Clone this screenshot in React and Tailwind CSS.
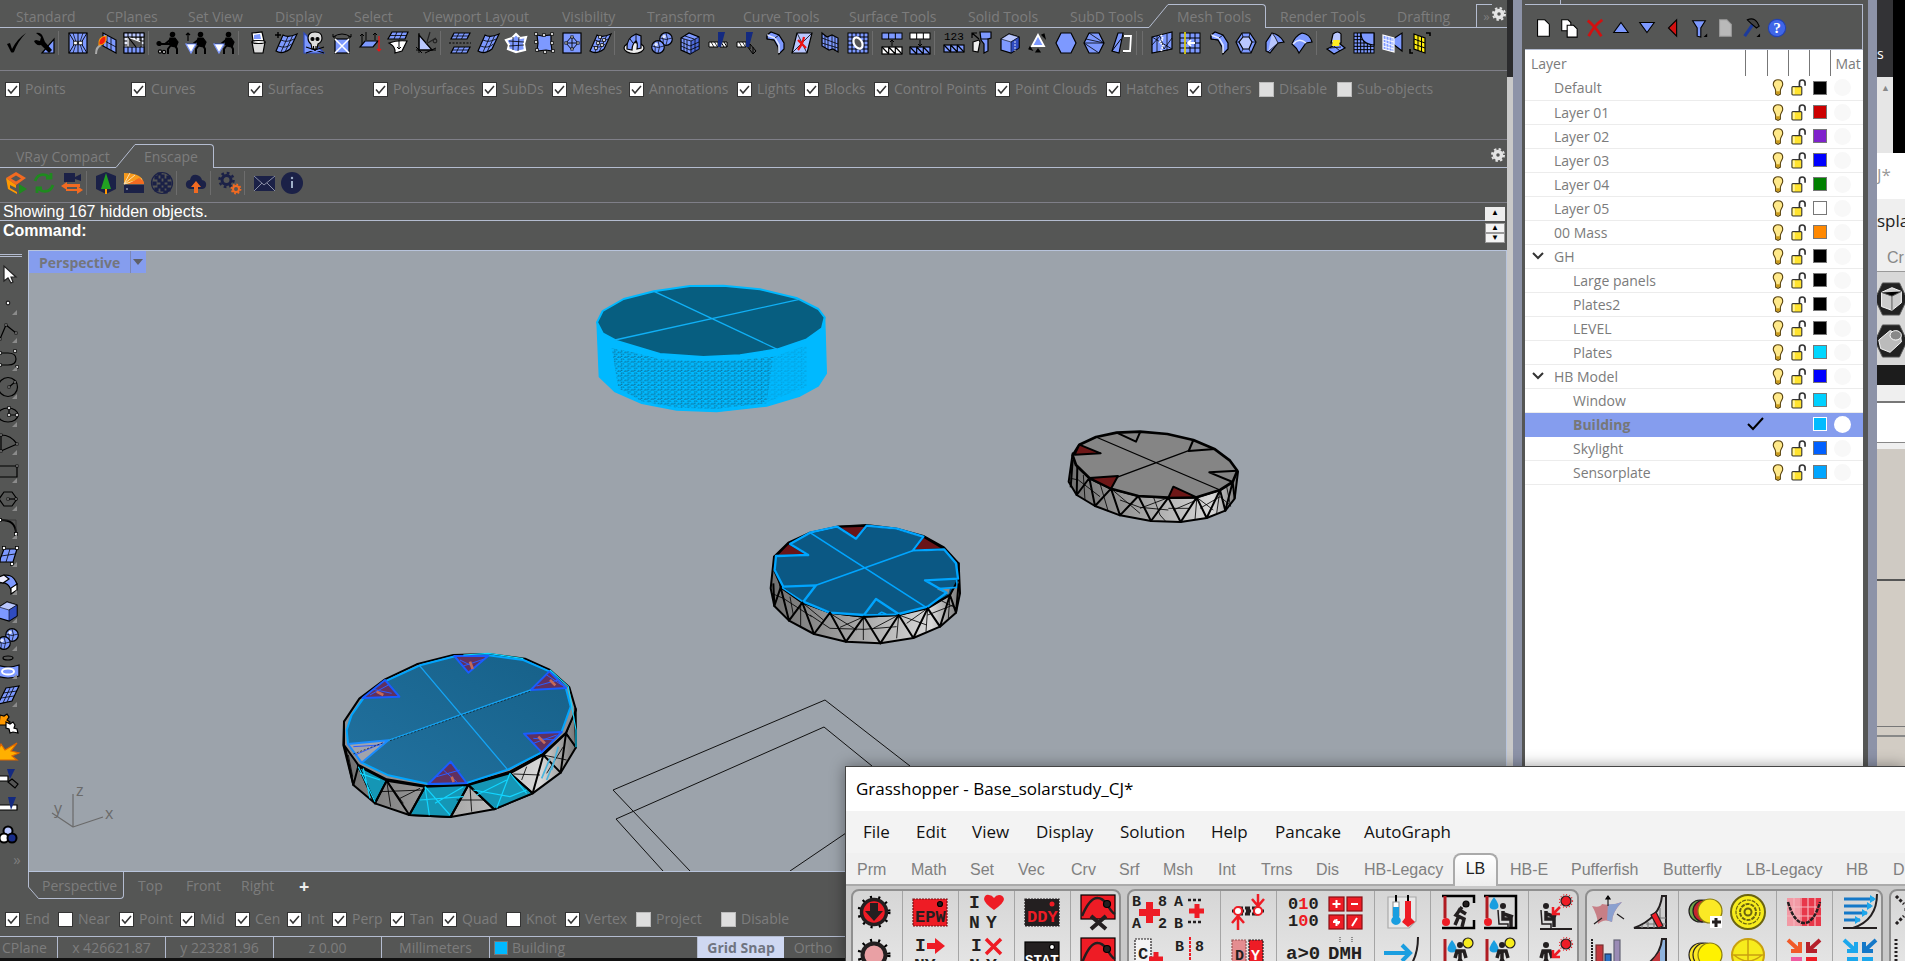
import React from 'react';

const B = '#7d99ff';
const D = '#2f4bc0';
const L = '#b9c7ff';

// small drawing helpers, every tool icon lives on a 22x22 canvas
const Svg = ({ children, className = 'w-[22px] h-[22px]', box = '0 0 22 22' }) => (
  <svg viewBox={box} className={`${className} shrink-0 overflow-visible`} fill="none" stroke="#000" strokeWidth="1.2" aria-hidden="true">
    {children}
  </svg>
);

const Grid = ({ x, y, w, h, nx, ny, fill = B, stroke = '#000' }) => (
  <g stroke={stroke} strokeWidth="1">
    <rect x={x} y={y} width={w} height={h} fill={fill} />
    {Array.from({ length: nx - 1 }, (_, i) => (
      <path key={`v${i}`} d={`M${x + ((i + 1) * w) / nx} ${y}v${h}`} />
    ))}
    {Array.from({ length: ny - 1 }, (_, i) => (
      <path key={`h${i}`} d={`M${x} ${y + ((i + 1) * h) / ny}h${w}`} />
    ))}
  </g>
);

const Dots = ({ at, r = 1.3 }) => at.map(([x, y]) => (
  <rect key={`${x}-${y}`} x={x - r} y={y - r} width={r * 2} height={r * 2} fill="#fff" strokeWidth=".8" />
));

const Patch = () => (
  <g>
    <path d="M8 3q5 3 14-1l-7 15q-8 6-14 2z" fill={B} />
    <path d="M13 4.500L6 20M17.500 4l-7 15M6 8q6 3 13-1M3.500 14q7 3 13-2" strokeWidth=".8" />
  </g>
);

const Person = () => (
  <g fill="#000" stroke="#000">
    <circle cx="15.500" cy="2.500" r="2.200" />
    <path d="M13 6l5 0 3 4-2 5-5-1-2-4z" />
    <path d="M14 13l-3 4v5M18 13l2 4v5M13 8l-5 4M2 12h11" strokeWidth="2" fill="none" />
  </g>
);

const Tri3 = ({ y, fill = '#fff' }) => (
  <g strokeWidth="1.2">
    <rect x="1" y={y} width="20" height="7" fill={fill} />
    <path d={`M7.700 ${y}v7M14.300 ${y}v7M1 ${y}l6.700 7M7.700 ${y}l6.600 7M14.300 ${y}l6.700 7`} />
  </g>
);

const Spheres = () => (
  <g>
    <circle cx="15" cy="7" r="6.300" fill={B} />
    <circle cx="7" cy="15" r="6.300" fill={B} />
    <path d="M9 6q6 3 12 0M1 14q6 3 12 0M15 1q3 6 0 12M7 9q3 6 0 12M11 3q2 6 1 9M3 11q2 6 1 9" strokeWidth=".7" />
    <circle cx="13" cy="4.500" r="1.800" fill="#dfe6ff" stroke="none" />
    <circle cx="5" cy="12.500" r="1.800" fill="#dfe6ff" stroke="none" />
  </g>
);

const Cube = () => (
  <g>
    <path d="M2 7l8-5 10 3v11l-8 5-10-3z" fill={B} />
    <path d="M2 7l8-5 10 3-8 5z" fill={L} strokeWidth=".6" />
    <path d="M12 10l8-5v11l-8 5z" fill={D} strokeWidth=".6" />
  </g>
);

const Bend = () => (
  <g>
    <path d="M4 3l4-3 8 3 5 8v6l-5 5-1-7-4-7-7-1z" fill={B} />
    <path d="M4 3l8 3 4 7v8" stroke="#e6ebff" strokeWidth="1.500" />
    <path d="M4 3v4l7 1M16 3l-4 3" strokeWidth=".8" />
  </g>
);

const Split = ({ tilt }) => (
  <g>
    <path d="M2 10h9v5H2z" fill="#fff" strokeWidth="1" />
    <path d="M4 10l3 5M7.500 10l3 5" strokeWidth=".8" />
    {tilt ? (
      <path d="M12 14l3-2 6 7-3 3zM15 12l0 5M18 15l0 6" fill="#555" strokeWidth="1" />
    ) : (
      <path d="M13 10h7v5h-7zM14 10l3 5M17 10l3 5" fill="#fff" strokeWidth="1" />
    )}
    <path d="M11 0h7l-4 15h-3z" fill="#142a80" stroke="none" />
  </g>
);

const meshTools = [
  [
    ['Accept', <path d="M2 12l3-1 2 6Q12 7 21 1 13 9 9 20q-2 1-3 0z" fill="#000" stroke="none" />],
    ['Options', <g><path d="M9 21L21 7v14z" fill={B} /><path d="M3 1q5-1 7 4l2 5 7 8-3 3-8-8q-5 1-7-4l2-1 4 1 1-4z" fill="#000" stroke="none" /></g>],
  ],
  [
    ['Mesh split', <g><rect x="2" y="1" width="18" height="20" fill={B} /><path d="M2 1l6 10-6 10M20 1l-6 10 6 10M11 1v20" strokeWidth=".9" /><path d="M6 1l3 9M16 1l-3 9M6 21l3-9M16 21l-3-9" strokeWidth=".7" /><Dots at={[[8.500, 11], [13.500, 11]]} r={1.8} /></g>],
    ['Burn', <g><path d="M8 1l13 7v13L8 14z" fill={B} /><path d="M12 4v12M16 6v12M8 8l13 7" strokeWidth=".8" /><path d="M1 22q0-7 5-9" stroke="#aaa" strokeWidth="2" /><path d="M4 13q-1-8 7-9 1 9-7 9z" fill="#f21b0c" stroke="#f90" /></g>],
    ['Patch mesh', <g><Grid x={1} y={1} w={20} h={20} nx={5} ny={5} fill="#e8edff" /><path d="M5 5v10h13v-5z" fill="#555" stroke="#fff" /><path d="M5 5l8 10M18 5v10" /><Grid x={1} y={15} w={20} h={6} nx={5} ny={1} /><Grid x={1} y={1} w={20} h={4} nx={5} ny={1} fill={L} /></g>],
  ],
  [
    ['Reduce', <g><Person /><circle cx="2" cy="11.500" r="2" fill="#000" /><circle cx="3" cy="19.500" r="1.600" fill="#ccc" /><circle cx="7" cy="20" r="1.600" fill="#ccc" /></g>],
    ['Offset', <g><Person /><path d="M1 12h10l-5 9z" fill="#fff" stroke={B} /><path d="M3 9V1M1 3l2-2 2 2" /></g>],
    ['Rebuild', <g><Person /><path d="M1 12h10l-5 9z" fill="#fff" stroke={B} /></g>],
  ],
  [
    ['Cull', <g><path d="M5 10h13l-2 11H7z" fill="#ddd" /><path d="M6 9L5 1l10-1 2 9z" fill="#fff" /><path d="M7 7V3l6-1 1 5z" fill={B} stroke="none" /><ellipse cx="11.500" cy="10" rx="6.500" ry="1.500" fill="#fff" /></g>],
    ['New patch', <g><Patch /><path d="M3 0v6M0 3h6" strokeWidth="1.400" /></g>],
    ['Check', <g><path d="M1 1v20h20z" fill={B} stroke={D} /><path d="M5 6q0-6 7-6t7 6q0 4-4 6l-1 5H9l-1-5q-3-2-3-6z" fill="#ddd" /><circle cx="9.500" cy="7" r="1.500" fill="#000" /><circle cx="14.500" cy="7" r="1.500" fill="#000" /><path d="M3 15l18 6M21 15L3 21M10.500 14v3M13 14v3" /></g>],
    ['Flip', <g><rect x="4" y="7" width="14" height="14" fill={B} /><path d="M4 7l14 14M18 7L4 21" stroke="#fff" strokeWidth="1.500" /><path d="M2 5q9-6 18 0M2 2v3h3M20 2v3h-3" strokeWidth="1" /></g>],
    ['Extrude', <g><path d="M1 15h13l5-6H6z" fill={B} /><path d="M3 13V2M7 8V0M16 8V1M1 4l2-2 2 2M14 3l2-2 2 2" strokeWidth="1" /><path d="M20 4v15M18 17l2 2 2-2" stroke="#e11" /></g>],
    ['Drape', <g><path d="M5 0h16l-3 7H1z" fill={B} /><path d="M10 0L7 7M15.500 0l-3 7M3 3.500h16" strokeWidth=".8" /><path d="M2 11q8-3 18-2-2 4-5 10l-7 2q1-6-6-10z" fill="#fff" /><path d="M12 8v9M10 15l2 2 2-2" strokeWidth="1" /></g>],
    ['Trim', <g><path d="M4 3l13 15H4z" fill={L} /><path d="M1 18h20M4 1v20M1 15l6 6M10 21l11-5" strokeWidth="1" /><path d="M11 12l10-6M12 10l3-10" stroke="#222" /><circle cx="20" cy="9" r="1.800" stroke="#222" /></g>],
  ],
  [
    ['Match', <g><path d="M5 1h16l-3 6H2z" fill={B} /><path d="M5 15h16l-3 6H2z" fill={B} /><path d="M10 1L7 7M15.500 1l-3 6M3.500 4h16M10 15l-3 6M15.500 15l-3 6M3.500 18h16" strokeWidth=".8" /><path d="M0 11h22" strokeDasharray="2 1.500" strokeWidth="1" /></g>],
    ['Patch', <Patch />],
    ['Star mesh', <g><path d="M11 2l4 4 6-1-2 7 1 6-9 2-8-3 1-4-3-5 6-2z" fill={B} stroke="#fff" strokeWidth="2.200" /><path d="M8 5v13M14 5l-1 14M4 9l15 1M4 14l15-1" strokeWidth=".8" /></g>],
    ['Points on', <g><path d="M4 3l5 1 9-1v8l1 8-6-1-9 1 1-8z" fill={B} /><Dots at={[[3, 2], [11, 3], [19, 2], [3, 10], [19, 11], [4, 18], [12, 20], [20, 19]]} /></g>],
    ['Diamond', <g><rect x="2" y="1" width="18" height="20" fill={B} /><path d="M11 4l6 7-6 7-6-7zM11 4v14M5 11h12" strokeWidth=".9" /><Dots at={[[11, 5], [17, 11], [11, 17], [5, 11]]} r={1.1} /></g>],
    ['Weld', <g><Patch /><Dots at={[[11, 5], [15, 8], [9, 11], [13, 13], [7, 16]]} /></g>],
  ],
  [
    ['Torus', <g><ellipse cx="11" cy="16" rx="10" ry="5.500" fill="#eee" /><path d="M4 17q-1-11 9-15l5 2v12l-4 1q1-6-1-8-4 3-4 9z" fill={B} /><path d="M13 2v7M7 7l3 4" strokeWidth=".9" /></g>],
    ['Spheres', <Spheres />],
    ['Mesh box', <g><path d="M2 6l8-5 10 4v12l-9 5-9-4z" fill={B} /><path d="M12 9l8-4v12l-9 5z" fill={D} stroke="none" opacity=".6" /><path d="M5 7v13M8 8v13M12 9v12M16 7v12M2 10l9 4 9-4M2 14l9 4 9-4M2 6l10 3 8-4M6 4l9 3" strokeWidth=".8" /></g>],
    ['Split mesh', <Split />],
    ['Trim mesh', <Split tilt />],
    ['Pipe', <Bend />],
    ['Delete face', <g><path d="M6 1h15l-5 20H1z" fill={L} /><path d="M6 1l10 20M21 1L1 21" strokeWidth=".8" /><path d="M7 8l8 8M13 5q-1 6-6 13" stroke="#e11" strokeWidth="2.200" /></g>],
    ['Wave', <g><path d="M3 1l5 4 5-2 6 3v14l-5-3-4 1-7-4z" fill={B} /><path d="M6 3v13M9 4v13M13 3v14M16 5v14M3 6l16 6M3 11l16 5" strokeWidth=".8" /></g>],
    ['Fill hole', <g><Grid x={1} y={1} w={20} h={20} nx={5} ny={5} /><ellipse cx="11" cy="11" rx="4" ry="6" transform="rotate(-30 11 11)" fill="#555" stroke="#fff" strokeWidth="2.200" /></g>],
  ],
  [
    ['Append', <g><Grid x={1} y={1} w={20} h={6} nx={3} ny={1} /><Tri3 y={15} /><path d="M11 14V8M9 10l2-2 2 2" strokeWidth="1" /></g>],
    ['Explode', <g><Grid x={1} y={1} w={20} h={6} nx={3} ny={1} fill="#fff" /><Tri3 y={15} fill={B} /><path d="M11 8v6M9 12l2 2 2-2" strokeWidth="1" /></g>],
  ],
  [
    ['Count', <g><text x="1" y="8" fontSize="11" fontFamily="Liberation Mono" fill="#000" stroke="none">123</text><Tri3 y={13} fill={B} /></g>],
    ['Unfold', <g><path d="M9 0h11v6l-3 1v12l-4 2v-9l-3-4z" fill={B} /><path d="M2 10l6-2 1 2-2 10-5-1z" fill="#eee" /><path d="M1 6V1h5M1 1l7 6M10 7h7" /></g>],
    ['Box', <g><Cube /><path d="M16 9v10" stroke="#fff" strokeDasharray="2 1" strokeWidth=".8" /></g>],
    ['Cone', <g><path d="M11 3l6 11H5z" fill={B} stroke="#fff" strokeWidth="1.800" /><path d="M15 3l3 3-1-4zM11 17l2 3h-4zM3 15l2 3-3-1z" fill="#000" /></g>],
    ['Hexagon', <path d="M6 1h10l5 10-5 10H6L1 11z" fill={B} />],
    ['Triangulate', <g><path d="M6 1h10l5 10-5 10H6L1 11z" fill={B} /><path d="M6 1l15 10H1L16 21M3 7l18 4" strokeWidth=".8" /></g>],
    ['Unweld', <g><path d="M7 1h5L8 21l-7-2z" fill={B} /><path d="M1 19L10 7M12 4h8l-1 15-7 1" strokeWidth="1" /><path d="M13 4h7l-1 15h-7" stroke="#fff" strokeWidth="1.800" /></g>],
  ],
  [],
  [
    ['Fracture', <g><path d="M1 5l20-5v17L1 21z" fill={B} /><path d="M1 13l8-9 4 13 8-11M6 4l0 16M16 2v17M1 5l20 12" strokeWidth=".8" /><path d="M10 3l2 4-3 3 3 4-2 5" stroke="#fff" strokeDasharray="1.500 1" strokeWidth="2" /></g>],
    ['Align', <g><Grid x={1} y={1} w={20} h={20} nx={4} ny={4} /><path d="M6 0v22" stroke="#fe1" strokeWidth="1.500" /><path d="M16 11H9M12 8l-3 3 3 3" stroke="#fff" strokeWidth="1.800" /></g>],
    ['Fold', <Bend />],
    ['Inset', <g><path d="M7 1h8l6 9-5 11H6L1 10z" fill={B} /><path d="M8 5h6l3 5-3 7H8l-4-7z" fill={L} /><path d="M7 1l1 4M15 1l-1 4M21 10h-4M16 21l-2-4M6 21l2-4M1 10h3" strokeWidth=".8" /></g>],
    ['Soft edge', <g><path d="M3 10L9 1q7 1 12 9l-6 1-8 10-4-2z" fill={B} /><path d="M9 1q3 3 6 10L5 20" fill={L} strokeWidth=".8" /></g>],
    ['Curl', <g><path d="M1 12Q4 4 11 1q8 1 10 9l-6 1-7 10q-2-5-7-9z" fill={B} /><path d="M2 12q6-7 13-1" stroke="#e6ebff" strokeWidth="1.500" /></g>],
  ],
  [
    ['Extract', <g><path d="M2 17l12-6 6 5-11 6z" fill={B} /><path d="M9 14l6 5M5 16l11-1" strokeWidth=".8" /><path d="M8 2q5-4 8 0v9H6z" fill={L} /><path d="M8 8h7l-1 6-7 0z" fill="#fe2" stroke="none" /></g>],
    ['Fillet', <g><Grid x={1} y={1} w={20} h={20} nx={6} ny={6} /><path d="M8 1q0 11 13 12v-12z" fill={B} /></g>],
    ['Mirror', <g><path d="M12 7l9-6v18l-9-7z" fill={B} /><path d="M2 3l11 3v14L2 17z" fill={B} stroke="#fff" /><path d="M5 4v14M8 5v14M11 6v13M2 7l11 3M2 10l11 4M2 14l11 3" stroke="#fff" strokeWidth=".9" /></g>],
    ['Select', <g><path d="M5 2l11 4v15L5 17z" fill="#fe1" /><path d="M9 3.500v15M12.500 5v15M5 7l11 4M5 12l11 4" strokeWidth="1" /><path d="M17 1h4v3M1 17v4h3" strokeWidth="1.600" /></g>],
  ],
];

const NAVY = '#1b2147';
const enscapeTools = [
  [
    ['Start Enscape', <g stroke="none"><path d="M11 0l10 6-10 7L1 6zM11 3.500L6 6.500l5 3 5-3z" fill="#f26a21" fillRule="evenodd" /><path d="M1 6l10 7v3l-6-3v3l7 4v2l-9-5z" fill="#f90" /><path d="M14 12l8 5-8 5z" fill="#1f8a1f" /></g>],
    ['Live updates', <path d="M2 9Q5 1 13 3l3 2M18 1v5h-5M20 13q-3 8-11 6l-3-2M4 21v-5h5" stroke="#1f8a1f" strokeWidth="2.800" />],
    ['Sync views', <g stroke="none"><path d="M3 1h11v9H3zM14 5l6-3v7l-6-2z" fill={NAVY} /><path d="M6 10v2h13v3H6v3l-6-4zM16 14l6 4-6 4v-3H5v-2h11z" fill="#f26a21" /></g>],
  ],
  [
    ['Assets', <g stroke="none"><path d="M1 4l10-4 10 4v13l-10 5-10-5z" fill={NAVY} /><path d="M11 1l5 16H6z" fill="#22a022" /><path d="M10 17h2v5h-2z" fill="#f90" /></g>],
    ['Materials', <g stroke="none"><path d="M1 1q19 0 20 11H1z" fill="#f79a1c" /><path d="M1 12L12 3M1 12l18-5M1 12L7 1" stroke="#fbe0b0" strokeWidth="1" /><path d="M16 6q5 2 5 6H5z" fill="#f26a21" /><rect x="1" y="13" width="20" height="8" fill={NAVY} /><circle cx="4" cy="17" r="1" fill="#8a8fa5" /></g>],
    ['Scene', <g stroke={NAVY} strokeWidth="1.200"><circle cx="11" cy="11" r="10.500" /><path d="M4 4h3v3H4zM10 3h3v3h-3zM16 4h3v3h-3zM7 7h3v3H7zM13 7h3v3h-3zM2 10h3v3H2zM10 10h3v3h-3zM17 10h3v3h-3zM7 13h3v3H7zM13 13h3v3h-3zM4 16h3v3H4zM10 16h3v3h-3zM16 16h3v3h-3zM7 1h3v2H7zM13 19h3v2h-3z" fill={NAVY} /></g>],
  ],
  [
    ['Upload', <g stroke="none"><path d="M5 17q-5-1-4-6 1-3 4-3 1-6 7-5 4 1 5 5 5 1 4 6-1 3-4 3z" fill={NAVY} /><path d="M11 9l5 6h-3v6H9v-6H6z" fill="#f26a21" /></g>],
  ],
  [
    ['Settings', <g><circle cx="7.500" cy="8" r="4.500" stroke={NAVY} strokeWidth="3" /><circle cx="7.500" cy="8" r="7" stroke={NAVY} strokeWidth="2.500" strokeDasharray="2.700 2.800" /><circle cx="17" cy="17" r="3" stroke="#f26a21" strokeWidth="2" /><circle cx="17" cy="17" r="4.500" stroke="#f26a21" strokeWidth="1.800" strokeDasharray="1.700 1.800" /></g>],
  ],
  [
    ['Feedback', <g><rect x="1" y="4" width="21" height="15" fill={NAVY} stroke="none" /><path d="M1 4l10 9L22 4M1 19l8-8M22 19l-8-8" stroke="#8a8fa5" strokeWidth="1" /></g>],
    ['About', <g><circle cx="11" cy="11" r="11" fill={NAVY} stroke="none" /><path d="M11 9v7" stroke="#9fb0c8" strokeWidth="2" /><circle cx="11" cy="6" r="1.200" fill="#9fb0c8" stroke="none" /></g>],
  ],
];

const sideTools = [
  ['Cancel', <path d="M7 2v15l4-3 3 5 2-1-2-5h5z" fill="#fff" stroke="#222" />],
  ['Point', <circle cx="11" cy="11" r="1.800" fill="#fff" stroke="#222" />],
  ['Polyline', <g><path d="M3 19L9 5l10 8" /><Dots at={[[3, 19], [9, 5], [19, 13]]} r={1} /></g>],
  ['Curve', <g><path d="M3 5h8q8 0 8 6t-8 6H3" /><Dots at={[[3, 5], [18, 3], [3, 17], [20, 19]]} /></g>],
  ['Circle', <g><circle cx="11" cy="11" r="9.500" /><path d="M12 11l6-5" /><Dots at={[[12, 11], [18, 6]]} r={1} /></g>],
  ['Ellipse', <g><ellipse cx="11" cy="11" rx="10" ry="7" /><path d="M12 4v7h8" /><Dots at={[[12, 4], [12, 11], [20, 11]]} /></g>],
  ['Arc', <g><path d="M4 19V3q10 0 16 9L4 19" /><Dots at={[[4, 3], [20, 12], [4, 19]]} r={1} /></g>],
  ['Rectangle', <g><path d="M1 6h19v11H1z" /><Dots at={[[20, 6]]} r={1} /></g>],
  ['Polygon', <g><path d="M7 4h8l5 7-5 7H7l-5-7z" /><path d="M11 11h8" /><Dots at={[[11, 11], [19, 11]]} r={1} /></g>],
  ['Fillet', <g><path d="M2 4q17-1 17 14" strokeWidth="2" /><path d="M4 4h15v14" stroke="#333" strokeWidth=".8" /><Dots at={[[3, 4], [19, 18]]} r={1.5} /></g>],
  ['Surface', <g><path d="M7 5h13l-4 13H2z" fill={B} /><path d="M13 5L9 18M4 12l14-2" strokeWidth=".8" /><Dots at={[[7, 4], [20, 4], [2, 17], [15, 20]]} r={1.500} /></g>],
  ['Extrude surface', <g><path d="M2 5q13-6 18 7l-6 6Q11 9 2 11z" fill={B} /><path d="M20 12v6l-6 4v-6z" fill="#fff" /><path d="M2 5l5-2 5 4-6 4-4-1z" fill="#eef" /></g>],
  ['Solid box', <Cube />],
  ['Sphere', <Spheres />],
  ['Cylinder', <g><ellipse cx="11" cy="2" rx="5" ry="2" /><path d="M0 9q11 4 22 0v11q-11 4-22 0z" fill={B} /><ellipse cx="11" cy="15.500" rx="6" ry="3" stroke="#fff" strokeWidth="2" /></g>],
  ['Mesh plane', <g><path d="M9 4l13-2-7 15-14 3z" fill={B} /><path d="M13 4L6 19M17 3l-7 15M6 9l14-2M4 14l13-2" strokeWidth=".8" /></g>],
  ['Plugins', <g><path d="M3 3l4 1 3-2 2 3-2 3 3 2-4 3H2z" fill="#f90" /><path d="M9 10l4 2 3-2 2 3-1 3 3 1 1 4-5-1-3 1-1-4-3-1z" fill="#fff" /></g>],
  ['Boom', <path d="M4 4l4 6L20 3l-6 8 8 2-7 3 5 4H0v-6z" fill="#ffb000" stroke="#d60" />],
  ['Trim', <g><path d="M0 8h11v5H0z" fill="#fff" /><path d="M10 1h8l-5 10z" fill="#142a80" stroke="none" /><path d="M11 14l4-3 6 5-3 4z" fill="#555" /></g>],
  ['Split', <g><path d="M0 9h20v5H0z" fill="#fff" /><path d="M11 1h8l-5 13z" fill="#142a80" stroke="none" /></g>],
  ['Boolean', <g strokeWidth="2"><circle cx="11" cy="7" r="4.500" fill={L} /><circle cx="7" cy="14" r="4.500" fill="#fff" /><circle cx="15" cy="14" r="4.500" fill="#172c8a" /></g>],
];

const layerTools = [
  ['New layer', <path d="M5 2h8l5 5v13H5z" fill="#fff" />],
  ['New sublayer', <g fill="#fff"><path d="M3 2h7l3 3v9H3z" /><path d="M9 8h7l4 4v9H9z" /></g>],
  ['Delete layer', <path d="M3 3q7 5 15 17M19 2Q10 8 4 20" stroke="#d21010" strokeWidth="3" />],
  ['Move up', <path d="M11 5l8 11H3z" fill={B} />],
  ['Move down', <path d="M11 16l8-11H3z" fill={B} />],
  ['Move left', <path d="M15 2v18l-9-9z" fill="#d21010" />],
  ['Filter', <g><path d="M4 3h14l-5 8v10l-4-1v-9z" fill={B} /><path d="M20 17v4h-4z" fill="#000" stroke="none" /></g>],
  ['Layer state', <path d="M5 2h8l5 5v13H5z" fill="#b9b9b9" stroke="#999" />],
  ['Tools', <g><path d="M13 7L4 20" stroke="#1d3b9c" strokeWidth="3.500" /><path d="M7 2q7-3 11 3l2 4-3 2-6-5z" fill="#444" /><path d="M21 17v4h-4z" fill="#000" stroke="none" /></g>],
  ['Help', <g><circle cx="11" cy="11" r="9.500" fill="#3f66e8" stroke="#2342b0" /><text x="11" y="17" fontSize="17" fontWeight="bold" fontFamily="Liberation Serif" fill="#fff" stroke="none" textAnchor="middle">?</text></g>],
];

const toolTabs = [
  ['Standard', 'w-[90px]'], ['CPlanes', 'w-[82px]'], ['Set View', 'w-[87px]'], ['Display', 'w-[79px]'],
  ['Select', 'w-[69px]'], ['Viewport Layout', 'w-[139px]'], ['Visibility', 'w-[85px]'], ['Transform', 'w-[96px]'],
  ['Curve Tools', 'w-[106px]'], ['Surface Tools', 'w-[119px]'], ['Solid Tools', 'w-[102px]'], ['SubD Tools', 'w-[78px]'],
];

const filters = [
  ['Points', 'w-[126px]', 'on'], ['Curves', 'w-[117px]', 'on'], ['Surfaces', 'w-[125px]', 'on'], ['Polysurfaces', 'w-[109px]', 'on'],
  ['SubDs', 'w-[70px]', 'on'], ['Meshes', 'w-[77px]', 'on'], ['Annotations', 'w-[108px]', 'on'], ['Lights', 'w-[67px]', 'on'],
  ['Blocks', 'w-[70px]', 'on'], ['Control Points', 'w-[121px]', 'on'], ['Point Clouds', 'w-[111px]', 'on'], ['Hatches', 'w-[81px]', 'on'],
  ['Others', 'w-[72px]', 'on'], ['Disable', 'w-[78px]', 'dim'], ['Sub-objects', 'w-[110px]', 'dim'],
];

const snaps = [
  ['End', 'w-[53px]', 'on'], ['Near', 'w-[61px]', 'off'], ['Point', 'w-[61px]', 'on'], ['Mid', 'w-[55px]', 'on'],
  ['Cen', 'w-[52px]', 'on'], ['Int', 'w-[45px]', 'on'], ['Perp', 'w-[58px]', 'on'], ['Tan', 'w-[52px]', 'on'],
  ['Quad', 'w-[64px]', 'on'], ['Knot', 'w-[59px]', 'off'], ['Vertex', 'w-[71px]', 'on'], ['Project', 'w-[85px]', 'dim'],
  ['Disable', 'w-[85px]', 'dim'],
];

const layers = [
  ['Default', 0, 'bg-black'], ['Layer 01', 0, 'bg-[#cc0000]'], ['Layer 02', 0, 'bg-[#7f22cc]'], ['Layer 03', 0, 'bg-[#0000ff]'],
  ['Layer 04', 0, 'bg-[#008000]'], ['Layer 05', 0, 'bg-white'], ['00 Mass', 0, 'bg-[#ff8800]'], ['GH', 0, 'bg-black', true],
  ['Large panels', 1, 'bg-black'], ['Plates2', 1, 'bg-black'], ['LEVEL', 1, 'bg-black'], ['Plates', 1, 'bg-[#00d7ff]'],
  ['HB Model', 0, 'bg-[#0000ff]', true], ['Window', 1, 'bg-[#00d0ff]'], ['Building', 1, 'bg-[#00bbff]'],
  ['Skylight', 1, 'bg-[#0060ff]'], ['Sensorplate', 1, 'bg-[#00a5ff]'],
];

const ToolButton = ({ name, children }) => (
  <button type="button" aria-label={name} className="flex h-7 w-7 shrink-0 items-center justify-center">
    <Svg>{children}</Svg>
  </button>
);

const ToolRow = ({ groups }) => (
  <div className="flex items-center overflow-hidden pl-0.5">
    {groups.map((group, i) => (
      <React.Fragment key={i}>
        {i > 0 && <span className="mr-[5px] h-6 w-px shrink-0 bg-[#6d6d6d]" />}
        {group.map(([name, icon]) => (
          <ToolButton key={name} name={name}>{icon}</ToolButton>
        ))}
      </React.Fragment>
    ))}
  </div>
);

const Check = ({ label, width, state }) => (
  <label className={`${width} flex shrink-0 items-center gap-[5px] whitespace-nowrap text-[14px] leading-5 text-[#7d7d7d]`}>
    <span className="grid shrink-0">
      <input
        type="checkbox"
        defaultChecked={state === 'on'}
        disabled={state === 'dim'}
        className="col-start-1 row-start-1 h-[15px] w-[15px] appearance-none border border-[#333] bg-white disabled:border-[#bbb] disabled:bg-[#dedede]"
      />
      {state === 'on' && (
        <svg viewBox="0 0 15 15" className="pointer-events-none col-start-1 row-start-1 h-[15px] w-[15px]" fill="none" stroke="#333" strokeWidth="1.500">
          <path d="M3 7.500l3 3.500 6-7" />
        </svg>
      )}
    </span>
    {label}
  </label>
);

const TabSlope = () => (
  <svg viewBox="0 0 20 24" className="h-6 w-5 shrink-0" fill="none" stroke="#b4bcd0" strokeWidth="1">
    <path d="M0 23.500L19 .500h1" />
  </svg>
);

const Gear = () => (
  <svg viewBox="0 0 14 14" className="h-3.5 w-3.5" fill="none" stroke="#e4e4e4">
    <circle cx="7" cy="7" r="3.500" strokeWidth="3.500" />
    <circle cx="7" cy="7" r="6" strokeWidth="2" strokeDasharray="2.400 2.300" />
  </svg>
);

const ToolbarArea = () => (
  <header className="shrink-0">
    <nav className="flex h-7 items-end">
      <div className="flex h-full flex-1 items-end border-b border-[#b4bcd0] pl-4">
        {toolTabs.map(([name, width]) => (
          <button type="button" key={name} className={`${width} shrink-0 whitespace-nowrap text-left leading-5`}>{name}</button>
        ))}
      </div>
      <TabSlope />
      <button type="button" className="h-6 w-[97px] shrink-0 whitespace-nowrap rounded-tr-sm border-r border-t border-[#b4bcd0] pl-2 text-left leading-6">Mesh Tools</button>
      <div className="flex h-full w-[241px] shrink-0 items-end border-b border-[#b4bcd0] pl-3.5">
        <button type="button" className="w-[117px] text-left leading-5">Render Tools</button>
        <button type="button" className="w-[79px] text-left leading-5">Drafting</button>
        <button type="button" aria-label="More tabs" className="h-[23px] w-4 border-l border-t border-[#b4bcd0] pl-1 text-[13px] leading-5">»</button>
        <button type="button" aria-label="Toolbar options" className="pb-1.5"><Gear /></button>
      </div>
    </nav>
    <div className="h-[43px] border-b border-[#7f7f88] pt-px">
      <ToolRow groups={meshTools} />
    </div>
    <div className="flex h-[69px] items-start overflow-hidden border-b border-[#7f7f88] pl-[5px] pt-2">
      {filters.map(([name, width, state]) => (
        <Check key={name} label={name} width={width} state={state} />
      ))}
    </div>
    <nav className="flex h-7 items-end">
      <div className="flex h-6 w-[116px] items-end border-b border-[#b4bcd0] pl-4">
        <button type="button" className="whitespace-nowrap leading-5">VRay Compact</button>
      </div>
      <TabSlope />
      <button type="button" className="h-6 w-[78px] rounded-tr-sm border-r border-t border-[#b4bcd0] pl-2 text-left leading-6">Enscape</button>
      <div className="flex h-6 flex-1 items-start justify-end border-b border-[#b4bcd0] pr-0.5 pt-1">
        <button type="button" aria-label="Panel options"><Gear /></button>
      </div>
    </nav>
    <div className="h-[35px] border-b border-[#7f7f88] pt-px">
      <ToolRow groups={enscapeTools} />
    </div>
    <div className="flex h-[47px] font-['Liberation_Sans',sans-serif] text-[16px] text-white">
      <div className="flex-1">
        <p className="h-[18px] border-b border-[#b4bcd0] pl-[3px] leading-[18px]">Showing 167 hidden objects.</p>
        <label className="flex items-center pl-[3px] font-bold leading-5">
          Command:
          <input className="ml-1 flex-1 bg-transparent outline-none" />
        </label>
      </div>
      <div className="mr-0.5 mt-1 flex w-5 flex-col text-center text-[8px] text-black">
        <span className="h-3.5 bg-[#eee] leading-3">▲</span>
        <button type="button" aria-label="Previous" className="mt-0.5 h-2.5 border border-[#999] bg-[#f4f4f4] leading-2">▲</button>
        <button type="button" aria-label="Next" className="h-2.5 border border-[#999] bg-[#f4f4f4] leading-2">▼</button>
      </div>
    </div>
  </header>
);

const Corner = () => <path d="M20 18v5h-5z" fill="#8b8b8b" stroke="none" />;

const SideBar = () => (
  <aside className="flex w-7 shrink-0 flex-col overflow-hidden pt-1">
    <span className="mb-1 h-[3px] w-[22px] shrink-0 border-y border-[#b4bcd0]" />
    {sideTools.map(([name, icon], i) => (
      <button type="button" key={name} aria-label={name} className="-ml-1 flex h-7 w-6 shrink-0 items-center justify-center">
        <Svg>{icon}{i > 0 && i < 16 && <Corner />}</Svg>
      </button>
    ))}
    <button type="button" aria-label="More tools" className="pl-1.5 text-[15px] leading-5">»</button>
  </aside>
);

/* the four massing models standing in the viewport */
const Model = () => (
  <svg viewBox="29 251 1477 620" preserveAspectRatio="xMinYMin slice" className="absolute inset-0 h-full w-full" fill="none" strokeLinejoin="round" aria-label="Model view">
    <defs>
      <pattern id="perf" width="20" height="14" patternUnits="userSpaceOnUse">
        <path d="M1 5l5-5 1 5zM8 0l6 5H9zM11 13l5-5 1 5zM18 7l2 6h-2zM0 8l3 5H0zM3 8h4v3H3z" fill="#0e6c92" />
      </pattern>
      <linearGradient id="rim" x1="0" x2="1">
        <stop offset="0" stopColor="#6f6f6f" />
        <stop offset=".5" stopColor="#ababab" />
        <stop offset=".85" stopColor="#d8d8d8" />
        <stop offset="1" stopColor="#777" />
      </linearGradient>
      <linearGradient id="roof" x1="0" y1="1" x2="1" y2="0">
        <stop offset="0" stopColor="#2272a0" />
        <stop offset="1" stopColor="#166088" />
      </linearGradient>
    </defs>

    <g stroke="#111">
      <path d="M690 871L613 790 825 700 910 766M663 871L616 819 824 727 872 766M790 871L846 833" />
    </g>

    <g transform="translate(560 260) scale(.33333)">
      <path d="M111 187L118 350 165 395 245 430 350 450 470 455 620 438 720 408 775 378 799 340 794 172 790 205 740 238 652 268 540 286 430 291 300 282 170 243z" fill="#00b9ff" stroke="#00b9ff" strokeWidth="4" />
      <path d="M155 265L200 272 300 298 430 304 540 300 640 290 620 430 470 446 350 443 245 424 175 385z" fill="url(#perf)" />
      <path d="M640 290L740 256 740 380 622 426z" fill="url(#perf)" opacity=".35" />
      <path d="M111 187L128 153 191 117 282 94 390 78 490 77 600 88 712 115 775 147 794 172 786 205 740 238 652 268 540 286 430 291 300 282 170 243 128 220z" fill="#075e80" stroke="#00b9ff" strokeWidth="6" />
      <path d="M282 94L652 268M165 240L718 118" stroke="#10b0f5" strokeWidth="4" />
    </g>

    <g transform="translate(1040 400) scale(.33333)" stroke="#000" strokeWidth="6">
      <path d="M98 160L86 245 110 285 165 318 240 346 333 363 422 366 500 354 556 332 584 296 594 215 540 270 470 292 385 293 295 288 213 266 148 234 112 200z" fill="url(#rim)" />
      <path d="M98 166L118 134 168 111 230 98 300 95 382 102 460 120 525 148 570 182 592 212 578 246 540 270 470 292 385 293 295 288 213 266 148 234 108 195z" fill="#858585" strokeWidth="8" />
      <path d="M118 134L104 164 182 160zM148 234L234 228 213 266zM400 260L385 293 470 292z" fill="#6e1717" />
      <path d="M230 98L288 125 300 97M460 120L446 153 525 147M592 212L508 217 578 246" />
      <path d="M168 111L540 270M230 232L446 152" strokeWidth="4" />
      <path d="M112 200L110 285 148 234 165 318 213 266 240 346 295 288 333 363 385 293 422 366 470 292 500 354 540 270 556 332 578 246 584 296M98 180L92 262" />
      <path d="M92 235L115 240 180 290M130 225L135 300M180 250L205 335M213 266L300 340M240 300L300 322 385 330M340 290L360 345 378 365M385 325L450 325M385 293L300 325M400 330L470 300 465 360M470 292L520 330M480 325L540 290 570 315M540 270L530 340M560 260L572 320" strokeWidth="2.500" />
    </g>

    <g transform="translate(740 500) scale(.33333)" stroke="#000" strokeWidth="6">
      <path d="M102 170L92 265 103 318 147 362 222 402 318 425 421 430 520 414 600 380 648 338 660 280 656 190 630 285 563 325 476 345 372 350 270 338 187 308 122 262z" fill="url(#rim)" />
      <path d="M102 170L145 128 210 98 292 80 380 75 470 86 550 108 612 142 656 190 654 240 630 285 563 322 476 345 372 350 270 338 187 306 125 262 104 215z" fill="#0b5884" />
      <path d="M145 130L205 165 108 168zM292 80L382 77 348 116zM550 110L518 152 612 147z" fill="#6a1518" />
      <path d="M630 265l-40 3 35 15z" fill="#888" stroke="none" />
      <path d="M210 98L292 80 348 116 380 77 470 86 550 110 518 152 612 148 648 190 654 236 555 241 620 278 563 320 476 342 408 297 372 345 270 338 190 305 228 256 130 260 104 210 108 168 205 165 150 132z" stroke="#00a5ff" strokeWidth="7" />
      <path d="M210 98L555 320M228 256L518 152M190 306L125 262M375 345L470 343M415 343l10-6 14 6M650 240L652 262 596 266" stroke="#00a5ff" strokeWidth="5" />
      <path d="M100 250L103 318 122 262 147 362 187 308 222 402 270 338 318 425 372 350 421 430 476 345 520 414 563 325 600 380 630 285 648 338 656 250" />
      <path d="M95 280L130 295 215 350M150 290L160 345M182 310L182 380M187 308L250 360M210 345L270 385 372 388M270 340L350 390M370 352L370 420M372 388L470 380M372 350L300 382M476 345L400 385M476 345L470 415M476 345L560 375M563 325L500 370M563 325L558 395M563 345L640 315M630 285L625 355M600 300L650 325" strokeWidth="2.500" />
    </g>

    <g transform="translate(320 630) scale(.33333)" stroke="#000" strokeWidth="6">
      <path d="M72 275L70 345 100 465 165 520 268 555 392 561 522 538 638 490 722 428 768 352 766 235 738 310 670 375 570 430 445 465 315 470 200 452 115 408z" fill="url(#rim)" />
      <path d="M115 408L200 452 165 520zM315 470L445 465 392 561 268 555zM445 465L570 430 638 490 522 538z" fill="#1596b5" />
      <path d="M72 275L118 206 195 148 290 103 400 75 505 72 615 86 690 120 748 172 768 240 738 308 670 370 570 425 445 462 320 468 200 448 115 405 72 345z" fill="#8b8f94" />
      <path d="M80 300L95 255 130 205 200 152 300 106 405 79 505 76 610 90 688 124 738 176 752 230 725 305 665 367 565 418 440 459 325 462 205 436 125 398 84 340z" fill="url(#roof)" stroke="#00a5ff" strokeWidth="6" />
      <path d="M195 150L238 200 128 204zM403 78L505 77 445 128zM688 124L738 174 632 180zM725 306L612 311 665 367zM392 395L325 462 440 459z" fill="#61305f" stroke="#1a5cff" />
      <path d="M84 342L205 331 125 398z" fill="#a0a3ad" stroke="#1a8cff" />
      <path d="M150 195L205 165M160 178L215 190M430 108L490 88M420 90L460 110M650 168L715 150M680 135L725 165M640 325L705 330M640 340L710 315M350 440L420 420M370 420L410 455M100 350L180 345M105 375L190 338" stroke="#2b5cff" strokeWidth="3" />
      <path d="M170 185l20 10M450 95l8 22M690 150l16 16M655 320l20 20M395 440l6 16" stroke="#c46a5a" strokeWidth="8" />
      <path d="M298 106L562 418M205 331L632 180" stroke="#14a4f5" strokeWidth="4" />
      <path d="M100 372L190 338M210 332L630 184" stroke="#111" strokeWidth="2" strokeDasharray="6 5" />
      <path d="M75 350L100 465 115 408 165 520 200 452 268 555 315 470M392 561L445 465 522 538M638 490L670 375 722 428 738 310 768 352 766 235M570 430L638 490M445 465L392 561" />
      <path d="M200 452L212 530M180 485L310 480M200 452L250 520M240 505L300 475M450 470L455 545M410 510L490 510M580 432L660 435M620 410L605 450M670 375L740 390M680 430L730 350M85 375L98 440M740 310L765 350" strokeWidth="2.500" />
      <path d="M115 410L165 515M120 430L180 450M130 415L150 505M315 470L328 556M315 470L390 555M300 510L430 500M345 520L430 470M570 430L530 535M460 480L570 500 620 480M470 495L560 450M570 430L620 490M430 75L505 70 610 86M690 120L745 170 768 300 768 352" stroke="#12d5ff" strokeWidth="3.500" />
      <path d="M690 385l-25 60M715 350l-20 70M700 400l-20 50" stroke="#4ab4dd" strokeWidth="5" />
    </g>

    <g stroke="#6a6a6a" strokeWidth="1.200">
      <path d="M73 794v33l30-10M73 827l-21-14" />
      <g fill="#6a6a6a" stroke="none" fontSize="16" fontFamily="Open Sans">
        <text x="105" y="819">x</text>
        <text x="54" y="814">y</text>
        <text x="76" y="796">z</text>
      </g>
    </g>
  </svg>
);

const StatusCell = ({ width, children }) => (
  <span className={`${width} flex h-full shrink-0 items-center justify-center border-r border-[#b4bcd0]`}>{children}</span>
);

const Rhino = () => (
  <main className="flex min-w-0 flex-1 flex-col overflow-hidden bg-[#555655] text-[14px] text-[#7d7d7d]">
    <ToolbarArea />
    <div className="flex min-h-0 flex-1">
      <SideBar />
      <section className="relative flex-1 overflow-hidden border border-[#b8c4dc] bg-[#9ca3ab]">
        <Model />
        <button type="button" className="relative flex h-[22px] items-center bg-[#859dee] pl-2.5 font-bold text-[#74767c]">
          Perspective
          <span className="ml-2.5 flex h-full items-center border-l border-[#7b86b5] pl-0.5 pr-[3px]">
            <svg viewBox="0 0 10 6" className="h-1.5 w-2.5"><path d="M0 0h10L5 6z" fill="#5f6068" /></svg>
          </span>
        </button>
      </section>
    </div>
    <nav className="flex h-7 shrink-0 items-start pl-7">
      <button type="button" className="flex h-[27px] items-start">
        <svg viewBox="0 0 12 27" className="h-[27px] w-3" fill="none" stroke="#b4bcd0"><path d="M.500 0v15l10 11.500H12" /></svg>
        <span className="h-[27px] w-[84px] rounded-br-sm border-b border-r border-[#b4bcd0] pl-0.5 text-left leading-7">Perspective</span>
      </button>
      <button type="button" className="ml-3.5 w-12 text-left leading-7">Top</button>
      <button type="button" className="w-[55px] text-left leading-7">Front</button>
      <button type="button" className="w-[58px] text-left leading-7">Right</button>
      <button type="button" className="text-[18px] font-bold leading-7 text-[#eee]">+</button>
    </nav>
    <div className="flex h-9 shrink-0 items-center overflow-hidden pl-[5px] pt-0.5">
      {snaps.map(([name, width, state]) => (
        <Check key={name} label={name} width={width} state={state} />
      ))}
    </div>
    <footer className="flex h-[25px] shrink-0 items-center border-b-[3px] border-t border-b-[#111] border-t-[#b4bcd0]">
      <StatusCell width="w-[58px] pr-2">CPlane</StatusCell>
      <StatusCell width="w-[108px]">x 426621.87</StatusCell>
      <StatusCell width="w-[108px]">y 223281.96</StatusCell>
      <StatusCell width="w-[108px]">z 0.00</StatusCell>
      <StatusCell width="w-[108px]">Millimeters</StatusCell>
      <span className="flex h-full w-[208px] shrink-0 items-center gap-1 border-r border-[#b4bcd0] pl-1">
        <i className="h-3.5 w-3.5 border border-[#777] bg-[#00b9ff]" />
        Building
      </span>
      <button type="button" className="h-full w-[86px] bg-[#cfd8f2] font-bold text-[#6f7480]">Grid Snap</button>
      <button type="button" className="w-[58px]">Ortho</button>
    </footer>
  </main>
);

const Bulb = () => (
  <svg viewBox="0 0 12 18" className="h-[17px] w-3" stroke="#5a4410" strokeWidth="1.200">
    <path d="M6 .800c3 0 5 2 5 4.700 0 2.500-2.500 4-2.500 7v3.500L6 17.300 3.500 16v-3.500c0-3-2.500-4.500-2.500-7C1 2.800 3 .800 6 .800z" fill="#ffe98a" />
    <path d="M4 13h4v3H4z" fill="#c99a1c" stroke="none" />
  </svg>
);

const Lock = () => (
  <svg viewBox="0 0 16 18" className="h-[17px] w-[15px]" fill="none" stroke="#333" strokeWidth="1.200">
    <path d="M9 8V4q0-3 3-3t3 3v3" strokeWidth="1.800" />
    <rect x="1" y="8" width="10.500" height="9" rx="1" fill="#ffe32e" />
    <path d="M3 9v7" stroke="#fff4a5" strokeWidth="2" />
  </svg>
);

const LayerRow = ({ name, depth, color, open }) => {
  const current = name === 'Building';
  return (
    <tr className={`h-6 border-b ${current ? 'border-[#859dee] bg-[#859dee] font-bold text-[#777]' : 'border-[#ececec]'}`}>
      <td className="p-0">
        <div className={`flex items-center whitespace-nowrap ${depth ? 'pl-12' : 'pl-[7px]'}`}>
          {!depth && (
            <svg viewBox="0 0 12 8" className="mr-[10px] h-2 w-3" fill="none" stroke="#333" strokeWidth="2">
              {open && <path d="M1 1l5 5 5-5" />}
            </svg>
          )}
          {name}
        </div>
      </td>
      <td className="p-0">
        {current && (
          <svg viewBox="0 0 17 14" className="ml-0.5 h-3.5 w-[17px]" fill="none" stroke="#000" strokeWidth="2"><path d="M1 7l5 5L16 1" /></svg>
        )}
      </td>
      <td className="p-0"><div className="flex justify-center">{!current && <Bulb />}</div></td>
      <td className="p-0"><div className="flex justify-center">{!current && <Lock />}</div></td>
      <td className="p-0"><div className={`mx-auto h-3.5 w-3.5 border ${current ? 'border-white' : 'border-[#777]'} ${color}`} /></td>
      <td className="p-0"><div className={`ml-1 h-[17px] w-[17px] rounded-full ${current ? 'bg-white' : 'bg-[#f8f8f8]'}`} /></td>
    </tr>
  );
};

const LayerPanel = () => (
  <aside className="flex w-[364px] shrink-0 flex-col border-x-[9px] border-[#8d93a8] bg-[#555655] pl-[3px] pr-[5px]">
    <div className="flex h-1 shrink-0"><span className="w-9 border-r border-[#b4bcd0]" /></div>
    <div className="flex h-[46px] shrink-0 items-center border-b border-r border-t border-[#b4bcd0] pl-[5px] pt-0.5">
      {layerTools.map(([name, icon]) => (
        <button type="button" key={name} aria-label={name} className="flex h-7 w-[26px] items-center justify-center">
          <Svg className="h-5 w-5">{icon}</Svg>
        </button>
      ))}
    </div>
    <div className="flex-1 overflow-hidden bg-white">
      <table className="w-full table-fixed border-collapse text-[14px] text-[#7b7b7b]">
        <thead>
          <tr className="h-[26px] text-left">
            <th className="p-0 pl-1.5 font-normal">Layer</th>
            <th className="w-[22px] border-l border-[#777] p-0" />
            <th className="w-[21px] border-l border-[#777] p-0" />
            <th className="w-[21px] border-l border-[#777] p-0" />
            <th className="w-[21px] border-l border-[#777] p-0" />
            <th className="w-[33px] border-l border-[#777] p-0 pl-[5px] font-normal">Mat</th>
          </tr>
        </thead>
        <tbody>
          {layers.map(([name, depth, color, open]) => (
            <LayerRow key={name} name={name} depth={depth} color={color} open={open} />
          ))}
        </tbody>
      </table>
    </div>
  </aside>
);

const HexIcon = ({ round }) => (
  <svg viewBox="0 0 34 36" className="h-[34px] w-[34px] shrink-0" stroke="#555">
    <path d="M8 1h18l8 17-8 17H8L0 18z" fill="#222" />
    {round ? (
      <g stroke="#fff">
        <path d="M4 17L16 7l11 4 1 8-12 11-10-4z" fill="#bbb" />
        <ellipse cx="22" cy="12" rx="6" ry="5" fill="#888" />
      </g>
    ) : (
      <g>
        <path d="M7 11l11-5 10 4v12l-10 8-11-4z" fill="#ccc" stroke="#fff" />
        <path d="M7 11l11 4 10-5M18 15v15" />
      </g>
    )}
  </svg>
);

// strip of the window that peeks out behind the layer panel
const BackWindow = () => (
  <div className="flex w-7 shrink-0 flex-col overflow-hidden bg-[#d2ccc4] text-[17px] text-[#222]">
    <div className="flex h-[77px] shrink-0 items-end bg-[#333336]">
      <span className="mb-2.5 h-6 w-4 text-[14px] text-white">s</span>
      <span className="h-full flex-1 bg-black" />
    </div>
    <div className="flex h-[76px] shrink-0 bg-[#e6e6e6]">
      <span className="w-4 pl-1 pt-1 text-[9px] text-[#888]">▲</span>
      <span className="flex-1 bg-black" />
    </div>
    <div className="h-[46px] shrink-0 bg-white leading-[44px] text-[#999]">J*</div>
    <div className="h-[43px] shrink-0 bg-[#efefef] leading-[43px]">spla</div>
    <div className="h-[30px] shrink-0 border-b border-[#999] bg-[#efefef] pl-2.5 font-['Liberation_Sans',sans-serif] text-[16px] leading-8 text-[#888]">Cr</div>
    <div className="flex h-[93px] shrink-0 flex-col items-center gap-2 bg-[#d8d8d8] pt-2.5">
      <HexIcon />
      <HexIcon round />
    </div>
    <div className="h-5 shrink-0 bg-[#1c1c1c]" />
    <div className="h-[18px] shrink-0 border-b-2 border-[#777] bg-[#efefef]" />
    <div className="h-[40px] shrink-0 border-b border-[#888] bg-white" />
    <div className="h-1.5 shrink-0 bg-[#efefef]" />
    <div className="h-[132px] shrink-0 border-b-2 border-[#555] bg-[#cfcac3]" />
    <div className="h-[146px] shrink-0 border-b border-[#777]" />
    <div className="h-2.5 shrink-0 border-b-2 border-[#888]" />
  </div>
);

const R = '#ee1c25';
const K = '#231f20';
const mono = { fontFamily: 'Liberation Mono', fontWeight: 'bold', stroke: 'none' };
const T = ({ x, y, s = 15, c = K, children }) => (
  <text x={x} y={y} fontSize={s} fill={c} {...mono}>{children}</text>
);

const Thermo = () => <path d="M5 2v22" stroke="#b01c22" strokeWidth="3" />;
const Body = ({ x = 20, y = 8 }) => (
  <g stroke={K} fill={K} transform={`translate(${x} ${y})`}>
    <circle cx="0" cy="0" r="3" stroke="none" />
    <path d="M0 5v9M0 14l-3 9M0 14l4 9M-5 13l2-7h7l2 7" strokeWidth="3.500" fill="none" />
  </g>
);
const Seated = ({ x = 8 }) => (
  <g stroke={K} fill="none" transform={`translate(${x} 12)`}>
    <circle cx="0" cy="0" r="3" fill={K} stroke="none" />
    <path d="M0 5v8h8v8M1 8l9 3" strokeWidth="3.500" />
    <path d="M-5 4l1 14H5v4" strokeWidth="1.500" />
  </g>
);
const RedSun = () => (
  <g stroke={R}><circle cx="28" cy="7" r="5" fill={R} stroke={K} /><circle cx="28" cy="7" r="6.500" strokeDasharray="1 2" fill="none" /><path d="M22 13l-7 7M15 13v7h7" strokeWidth="2.500" fill="none" /></g>
);
const Drop = () => <path d="M12 3q6 8 4 11-4 3-8 0-2-3 4-11z" fill="#1a9ee0" stroke="none" />;
const YellowSun = () => <circle cx="28" cy="6" r="5" fill="#f7ec1c" stroke={K} />;
const Arrows = ({ a, b, c, d }) => (
  <g strokeWidth="4" fill="none">
    <path d="M2 3l12 11M14 5v9H5" stroke={a} />
    <path d="M34 3L22 14M22 5v9h9" stroke={b} />
    <path d="M2 33l12-11M14 31v-9H5" stroke={c} />
    <path d="M34 33L22 22M22 31v-9h9" stroke={d} />
  </g>
);

const ribbon = [
  [
    [['Import', <g><circle cx="18" cy="18" r="14.500" strokeDasharray="2 6" strokeWidth="4" /><circle cx="18" cy="18" r="12.500" fill={R} strokeWidth="3.500" stroke={K} /><path d="M14 9h8v8h5l-9 10-9-10h5z" fill={K} stroke="none" /></g>, <g><circle cx="18" cy="18" r="14.500" strokeDasharray="2 6" strokeWidth="4" /><circle cx="18" cy="18" r="11.500" fill="#e9a0a4" strokeWidth="4" stroke={K} /></g>]],
    [['EPW', <g><rect x="1" y="5" width="34" height="27" fill={R} stroke="#7a1015" strokeDasharray="2 1" /><T x={3} y={28} s={17}>EPW</T><circle cx="28" cy="10" r="2.500" fill={K} /></g>, <g><T x={3} y={14} s={18}>I</T><path d="M15 6h8V1l10 8-10 8v-5h-8z" fill={R} stroke="none" /><T x={2} y={34} s={18}>NY</T></g>]],
    [['Download', <g><T x={1} y={14} s={18}>I</T><path d="M26 16Q16 9 16 5q1-5 5-4 3 0 5 3 2-3 5-3 4 0 5 4 0 4-10 11z" fill={R} stroke="none" /><T x={1} y={34} s={18}>N</T><T x={18} y={34} s={18}>Y</T></g>, <g><T x={3} y={14} s={18}>I</T><path d="M18 2l15 15M33 2L18 17" stroke={R} strokeWidth="3.500" /><T x={1} y={34} s={18}>N</T><T x={18} y={34} s={18}>Y</T></g>]],
    [['DDY', <g><rect x="1" y="5" width="34" height="27" fill={K} stroke={K} strokeDasharray="2 1" /><T x={3} y={28} s={17} c={R}>DDY</T><circle cx="28" cy="10" r="2.500" fill={R} stroke="none" /></g>, <g><rect x="1" y="5" width="34" height="27" fill={K} /><T x={1} y={28} s={14} c="#fff">STAT</T><circle cx="28" cy="10" r="2.500" fill="#fff" /></g>]],
    [['Clear', <g><rect x="1" y="1" width="34" height="24" fill={R} /><path d="M2 22Q10 3 18 4q4 0 9 6 4 8 8 10" stroke={K} strokeWidth="2.500" /><circle cx="27" cy="10" r="3.500" fill={K} /><path d="M11 22l15 13M26 22L11 35" stroke={K} strokeWidth="4" /></g>, <g><rect x="1" y="1" width="34" height="30" fill={R} /><path d="M2 26Q10 5 18 6q4 0 9 6 4 8 8 10" stroke={K} strokeWidth="2.500" /><circle cx="27" cy="12" r="3.500" fill={K} /></g>]],
  ],
  [
    [
      ['Combine', <g><T x={0} y={12}>B</T><T x={26} y={12}>8</T><T x={0} y={34}>A</T><T x={26} y={34}>2</T><path d="M14 8h7v7h7v7h-7v7h-7v-7H7v-7h7z" fill={R} stroke="none" /></g>, <g><rect x="3" y="2" width="16" height="26" fill="#f4f4f4" strokeDasharray="2 1" stroke={K} /><T x={6} y={22} s={17}>C</T><path d="M24 15v14M17 22h14" stroke={R} strokeWidth="5" /></g>],
      ['Append', <g><T x={0} y={12}>A</T><T x={0} y={34}>B</T><path d="M14 6h14M14 28h14" strokeDasharray="3 2" stroke={K} strokeWidth="2.500" /><path d="M23 10v14M15 17h15" stroke={R} strokeWidth="5" /></g>, <g><T x={1} y={14}>B</T><T x={21} y={14}>8</T><T x={1} y={34}>A</T><T x={21} y={34}>2</T><path d="M16 0v36" stroke={R} strokeDasharray="3 1" strokeWidth="2" /></g>],
    ],
    [['Average', <g><path d="M2 17h32M8 14h20M8 20h20" stroke={K} strokeWidth="3" strokeDasharray="5 2" /><circle cx="8" cy="17" r="4" fill="#fff" stroke={R} strokeWidth="2" /><circle cx="28" cy="17" r="4" fill="#fff" stroke={R} strokeWidth="2" /><path d="M28 0v12M22 5l6 7 6-7M8 36V23M2 29l6-7 6 7" stroke={R} strokeWidth="2.500" /></g>, <g><rect x="2" y="3" width="14" height="26" fill="#e48d90" stroke="#955" strokeDasharray="2 1" /><rect x="19" y="3" width="14" height="26" fill={R} stroke={K} strokeDasharray="2 1" /><T x={5} y={23}>D</T><T x={21} y={23} c="#fff">Y</T></g>]],
    [
      ['Binary', <g><T x={2} y={15} s={17}>0<tspan fill={R}>1</tspan>0</T><T x={2} y={32} s={17}>1<tspan fill={R}>0</tspan>0</T></g>, <T x={0} y={22} s={19}>a&gt;0</T>],
      ['Operators', <g fill={R} stroke="#8a1015"><rect x="1" y="3" width="15" height="14" /><rect x="19" y="3" width="15" height="14" /><rect x="1" y="21" width="15" height="14" /><rect x="19" y="21" width="15" height="14" /><path d="M8.500 6v8M4.500 10h8M23 10h7M5 28h7M8.500 25v7M6 26l5 4M24 32l5-8" stroke="#fff" strokeWidth="2" /></g>, <g><T x={0} y={22} s={19}>DMH</T><path d="M12 0v6M24 0v6" stroke="#555" strokeDasharray="1 1" /></g>],
    ],
    [['Temperature', <g><path d="M4 3h28v24l-7 7H4z" fill="#e8e8e8" stroke="#aaa" /><path d="M12 1v9M24 1v6" strokeWidth="2" /><path d="M9 8h6v14H9z" fill="#fff" stroke="#999" /><path d="M9 13h6v10q3 3 1 6-4 4-8 0-2-3 1-6z" fill="#1a9ee0" stroke="none" /><path d="M21 7h6v17l4 4-7 5-6-5 3-4z" fill={R} stroke="none" /></g>, <g><path d="M0 16h26M18 8l8 8-8 8" stroke="#1a9ee0" strokeWidth="4" /><path d="M34 0q0 20-10 32" strokeWidth="2" stroke={K} /></g>]],
    [
      ['Adaptive', <g><path d="M2 2h32v7M34 26v8H2" strokeWidth="2.500" /><Thermo /><circle cx="6" cy="28" r="4" fill={R} stroke="none" /><circle cx="26" cy="10" r="3" fill={K} /><path d="M22 13l-6 8 8 4-2 8M18 15l8 5M18 24l-3 7" strokeWidth="3.500" stroke={K} /></g>, <g><Thermo /><Drop /><YellowSun /><Body /></g>],
      ['PMV', <g><path d="M2 2h32v32H2" strokeWidth="2.500" /><Thermo /><circle cx="6" cy="28" r="4" fill={R} stroke="none" /><Drop /><Seated x={21} /></g>, <g><Thermo /><Drop /><YellowSun /><Body /></g>],
    ],
    [['Solar MRT', <g><Seated /><path d="M2 35h32" strokeWidth="2" stroke={K} /><RedSun /></g>, <g><Body x={8} /><RedSun /></g>]],
  ],
  [
    [
      ['Psych chart', <g><path d="M2 12q8 2 10-2 10 2 20-2-10 10-10 20-8-4-14 2-1-10-6-18z" fill="#c77f86" stroke="none" /><path d="M18 10q6 1 14-2-10 10-10 20l-5-2z" fill="#8aa0cf" stroke="none" /><path d="M18 4v8M4 30l8-6M27 20l7 5" stroke={K} /><path d="M18 2l2 3h-4z" fill={K} /></g>, <g><path d="M2 2v34" stroke={K} strokeDasharray="2 1" strokeWidth="2" /><rect x="6" y="8" width="7" height="28" fill="#c4363c" stroke="#733" /><rect x="15" y="17" width="6" height="19" fill="#2c72c4" stroke="#235" /><rect x="24" y="3" width="6" height="28" fill="#9a8bb5" stroke="#667" /></g>],
      ['Hygro', <g><path d="M2 34Q28 24 30 2h4v32z" fill="#ccc" stroke={K} strokeWidth="2" /><path d="M10 31v3M16 28v6M22 23v11M28 14v20M14 30h20M20 24h14" stroke="#777" /><path d="M19 21l5-3 7 14-5 2z" fill={R} stroke={K} /></g>, <g><path d="M2 34Q28 24 30 2h4v32z" fill="#8fb3dd" stroke={K} strokeWidth="2" /><path d="M12 34l16-20v20z" fill="#c4363c" stroke="none" /></g>],
    ],
    [
      ['Sun path', <g><circle cx="12" cy="17" r="11" fill="#6fa84a" stroke={K} /><circle cx="16" cy="17" r="11" fill="#c8252c" stroke={K} /><circle cx="22" cy="17" r="12" fill="#fbe925" stroke="#8a7d10" /><rect x="22" y="22" width="12" height="12" fill="#fff" stroke="none" /><path d="M28 24v9M24 28h9" strokeWidth="3" stroke={K} /></g>, <g><circle cx="13" cy="18" r="12" fill="#fbe925" stroke={K} /><circle cx="17" cy="18" r="12" fill="#fbe925" stroke={K} /><circle cx="22" cy="18" r="12" fill="#fff200" stroke="#8a7d10" /></g>],
      ['Sky dome', <g stroke="#6b6410"><circle cx="18" cy="18" r="17" fill="#f7ec1c" strokeWidth="2" /><circle cx="18" cy="18" r="12" strokeDasharray="4 1" /><circle cx="18" cy="18" r="8" strokeWidth="2" strokeDasharray="4 1" /><circle cx="18" cy="18" r="3.500" strokeWidth="2" /></g>, <g><circle cx="18" cy="18" r="16" fill="#f7ec1c" stroke="#c9a010" strokeWidth="2" /><path d="M2 18h32M18 2v32M4 18q14 12 28 0" stroke="#c9a010" strokeWidth="1.500" /></g>],
    ],
    [['Degree days', <g><rect x="1" y="4" width="34" height="28" fill="#e8384a" stroke="none" /><path d="M1 4h13v28H1z" fill="#f29aa5" stroke="none" /><path d="M1 13h34M1 22h34M8 4v28M15 4v28M22 4v28M29 4v28" stroke="#f6b6bd" /><path d="M2 8q6 21 16 21T34 8" stroke={K} strokeWidth="2.500" strokeDasharray="4 1" /></g>, <Arrows a="#f15a29" b="#b5202b" c="#ef5ba1" d="#ee1c25" />]],
    [['Wind profile', <g><path d="M2 5h30M2 12h27M2 19h23M2 26h16" stroke="#1478c8" strokeWidth="3" /><path d="M28 1l6 4-6 4M25 8l6 4-6 4M20 15l6 4-6 4M13 22l6 4-6 4" fill="#1ca7ec" stroke="none" /><path d="M35 0q0 26-24 34M1 34h34" stroke={K} strokeWidth="2" /></g>, <Arrows a="#1ca7ec" b="#1478c8" c="#1ca7ec" d="#1ca7ec" />]],
  ],
  [
    [['More', <g><path d="M2 2l8 8M12 14v4M2 30l8-8" stroke={K} strokeWidth="3" strokeDasharray="3 2" /></g>, <path d="M2 2v24" stroke={K} strokeDasharray="2 2" strokeWidth="3" />]],
  ],
];

const menu = [
  ['File', 'w-[53px]'], ['Edit', 'w-14'], ['View', 'w-16'], ['Display', 'w-[84px]'],
  ['Solution', 'w-[91px]'], ['Help', 'w-16'], ['Pancake', 'w-[89px]'], ['AutoGraph', 'w-[100px]'],
];

const ghTabs = [
  ['Prm', 'w-[54px]'], ['Math', 'w-[59px]'], ['Set', 'w-12'], ['Vec', 'w-[53px]'], ['Crv', 'w-12'], ['Srf', 'w-11'],
  ['Msh', 'w-[55px]'], ['Int', 'w-[43px]'], ['Trns', 'w-[55px]'], ['Dis', 'w-12'], ['HB-Legacy', 'w-[89px]'],
];

const ghTabsRight = [
  ['HB-E', 'w-[61px]'], ['Pufferfish', 'w-[92px]'], ['Butterfly', 'w-[83px]'], ['LB-Legacy', 'w-[100px]'], ['HB', 'w-[47px]'], ['D', 'w-3'],
];

const Grasshopper = () => (
  <section className="absolute bottom-0 left-[845px] right-0 flex h-[195px] flex-col overflow-hidden border-l border-t border-[#444] bg-[#f0f0f0] shadow-[0_0_14px_rgba(0,0,0,0.4)]">
    <h1 className="h-11 shrink-0 bg-white pl-2.5 text-[17px] leading-[44px] text-black">Grasshopper - Base_solarstudy_CJ*</h1>
    <nav className="flex h-[42px] shrink-0 items-center bg-[#f3f3f3] pl-[17px] text-[17px] text-[#111]">
      {menu.map(([name, width]) => (
        <button type="button" key={name} className={`${width} shrink-0 text-left`}>{name}</button>
      ))}
    </nav>
    <nav className="flex h-[33px] shrink-0 items-stretch font-['Liberation_Sans',sans-serif] text-[16px] text-[#808080]">
      <div className="flex items-center border-b-2 border-[#aaa] pl-[11px] pt-0.5">
        {ghTabs.map(([name, width]) => (
          <button type="button" key={name} className={`${width} shrink-0 text-left`}>{name}</button>
        ))}
      </div>
      <button type="button" className="w-[45px] shrink-0 rounded-t-lg border-x-2 border-t-2 border-[#aaa] bg-gradient-to-b from-white to-[#eee] pb-1 text-[#222]">LB</button>
      <div className="flex flex-1 items-center overflow-hidden border-b-2 border-[#aaa] pl-3 pt-0.5">
        {ghTabsRight.map(([name, width]) => (
          <button type="button" key={name} className={`${width} shrink-0 text-left`}>{name}</button>
        ))}
      </div>
    </nav>
    <div className="flex min-h-0 flex-1 gap-1.5 overflow-hidden bg-[#c9c9c9] pl-[5px] pt-[3px]">
      {ribbon.map((group, i) => (
        <div key={i} className="flex h-24 shrink-0 rounded-lg border-2 border-[#8f8f8f] bg-gradient-to-b from-[#d6d6d6] to-[#e8e8e8]">
          {group.map((section, j) => (
            <div key={j} className="flex border-l border-[#a5a5a5] pl-1.5 pr-[7px] pt-[3px] first:border-l-0 first:pl-0 last:pr-0">
              {section.map(([name, top, bottom]) => (
                <div key={name} className="flex w-[42px] flex-col items-center gap-[7px]">
                  <button type="button" aria-label={name}><Svg box="0 0 36 36" className="h-9 w-9">{top}</Svg></button>
                  <button type="button" aria-label={`${name} alternate`}><Svg box="0 0 36 36" className="h-9 w-9">{bottom}</Svg></button>
                </div>
              ))}
            </div>
          ))}
        </div>
      ))}
    </div>
  </section>
);

const App = () => (
  <div className="relative flex h-screen w-full overflow-hidden bg-[#555655] font-['Open_Sans','Noto_Sans',sans-serif]">
    <Rhino />
    <div className="flex w-1.5 shrink-0 flex-col bg-[#c9c9c9]">
      <span className="h-[77px] bg-[#2b2b2d]" />
    </div>
    <LayerPanel />
    <BackWindow />
    <Grasshopper />
  </div>
);

export default App;
